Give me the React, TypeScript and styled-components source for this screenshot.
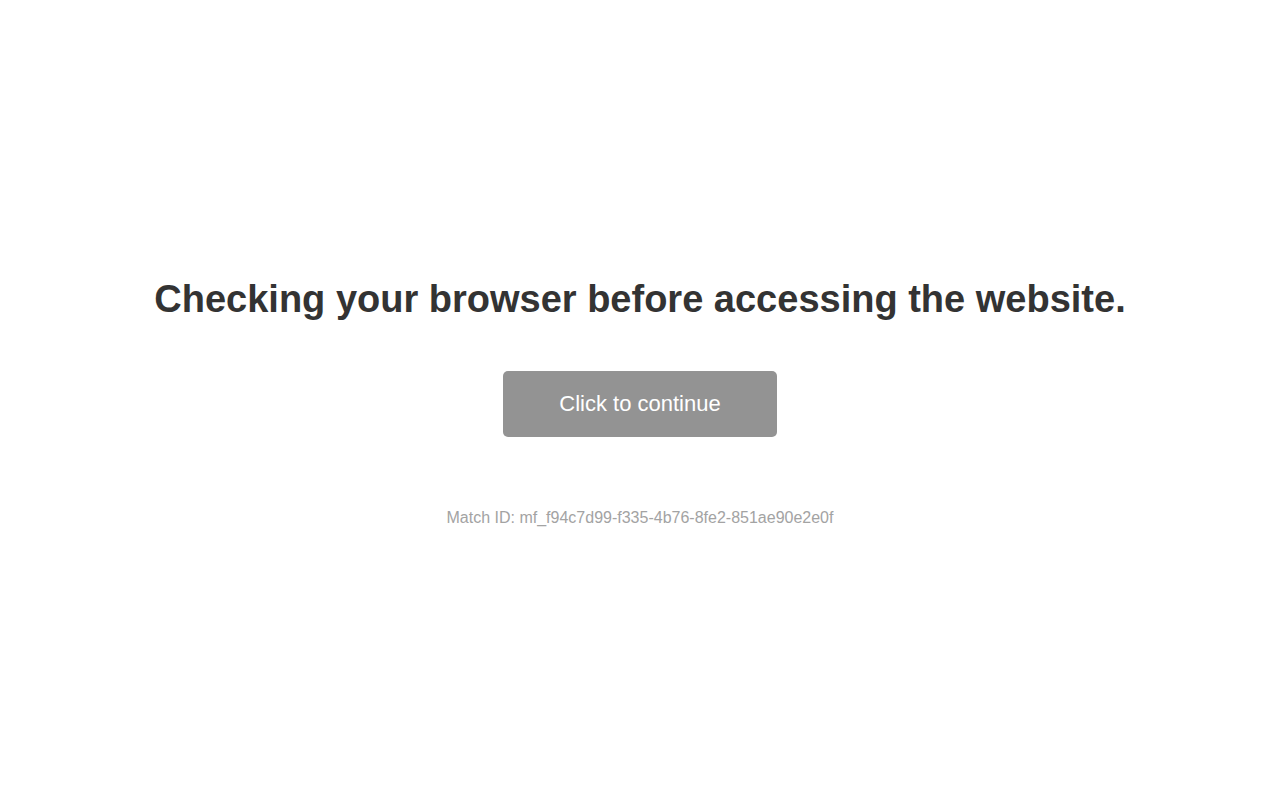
import React from "react";
import styled, { createGlobalStyle } from "styled-components";

const Global = createGlobalStyle`
  html, body { margin: 0; padding: 0; background: #fff; }
  body { font-family: "Liberation Sans", Arial, Helvetica, sans-serif; }
`;

const Page = styled.main`
  box-sizing: border-box;
  height: 800px;
  padding-top: 2px;
  display: flex;
  flex-direction: column;
  align-items: center;
  justify-content: center;
  text-align: center;
`;

const Title = styled.h1`
  margin: 0;
  font-size: 38px;
  font-weight: 700;
  color: #333333;
  line-height: 48px;
`;

const ContinueButton = styled.button`
  margin-top: 48px;
  width: 274px;
  height: 66px;
  border: none;
  border-radius: 5px;
  background: #939393;
  color: #ffffff;
  font-family: "Liberation Sans", Arial, sans-serif;
  font-size: 22px;
  cursor: pointer;
`;

const MatchId = styled.p`
  margin: 72px 0 0;
  font-size: 16px;
  color: #a3a3a3;
`;

export default function App() {
  return (
    <>
      <Global />
      <Page>
        <Title>Checking your browser before accessing the website.</Title>
        <ContinueButton>Click to continue</ContinueButton>
        <MatchId>Match ID: mf_f94c7d99-f335-4b76-8fe2-851ae90e2e0f</MatchId>
      </Page>
    </>
  );
}
